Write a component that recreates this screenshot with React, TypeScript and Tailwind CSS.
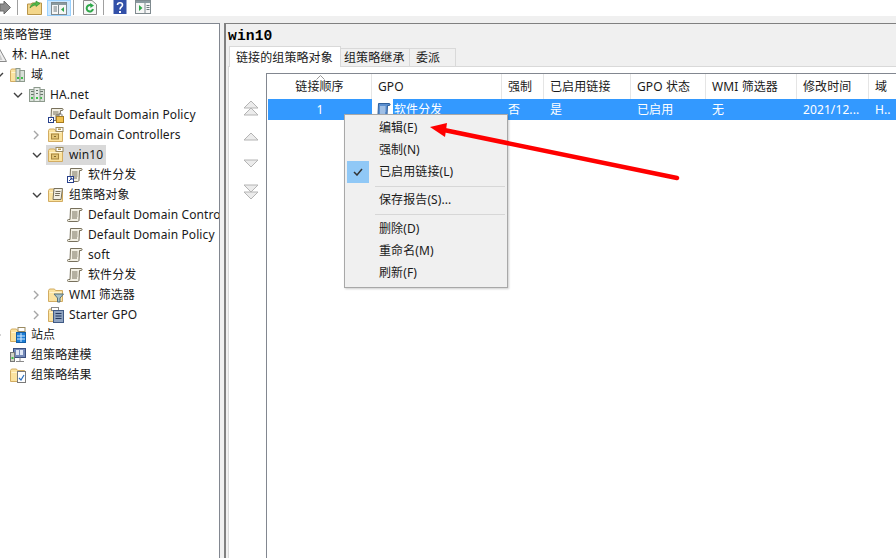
import React from "react";

const Folder = ({ children }: { children?: React.ReactNode }) => (
  <svg width="16" height="16" viewBox="0 0 16 16" className="shrink-0">
    <path d="M0.5 3.5 V14.5 H14.5 V3.5 H7.5 L6.5 2 H1.5 Z" fill="#fbe3a0" stroke="#d2ac62" />
    <path d="M1.5 5 H13.5 V6 H1.5 Z" fill="#fff4cf" />
    {children}
  </svg>
);

const OU = () => (
  <Folder>
    <rect x="8" y="0.5" width="7" height="4" fill="#fff" stroke="#9a8a60" />
    <rect x="10" y="1.5" width="3" height="1.5" fill="#b89a50" />
    <rect x="3.5" y="7" width="7" height="5" fill="#e2c476" stroke="#a5853f" />
    <rect x="6" y="9" width="2" height="1" fill="#7d6a30" />
  </Folder>
);

const Scroll = ({ link, blue }: { link?: boolean; blue?: boolean }) => (
  <svg width="16" height="16" viewBox="0 0 16 16" className="shrink-0">
    <path d="M3.5 1.5 H14 C15.5 1.5 15.5 3.5 14 3.5 H12.5 L12 13 C12 14.5 11 14.5 10 14.5 H1.5 C0 14.5 0 12.5 1.5 12.5 H3 Z" fill={blue ? "#5b8fd0" : "#f3f0e4"} stroke={blue ? "#2f5f9b" : "#77705c"} />
    <path d="M5 5 H10.5 M5 7 H10.5 M5 9 H10.5 M5 11 H10" stroke={blue ? "#e4eefa" : "#77705c"} />
    {link && (
      <>
        <rect x="0.5" y="9.5" width="6" height="6" fill="#fff" stroke="#27408b" />
        <path d="M2 14 L5 11 M3 11 H5 V13" stroke="#27408b" fill="none" />
      </>
    )}
  </svg>
);

const Server = ({ x = 0 }: { x?: number }) => (
  <g transform={`translate(${x} 0)`}>
    <rect x="0.5" y="2.5" width="6" height="12" fill="#d8e0d8" stroke="#8d9a8d" />
    <rect x="2" y="4" width="3" height="1" fill="#66736a" />
    <rect x="2" y="7" width="3" height="1" fill="#66736a" />
    <rect x="2" y="10" width="2" height="2" fill="#3fc04a" />
  </g>
);

const Domain = () => (
  <svg width="16" height="16" viewBox="0 0 16 16" className="shrink-0">
    <Server x={0} />
    <Server x={9} />
    <rect x="5" y="0.5" width="6" height="14" fill="#e6ebe6" stroke="#8d9a8d" />
    <rect x="7" y="3" width="2" height="1" fill="#66736a" />
    <rect x="7" y="6" width="2" height="1" fill="#66736a" />
    <rect x="7" y="10" width="2" height="2" fill="#3fc04a" />
  </svg>
);

const Forest = () => (
  <svg width="16" height="16" viewBox="0 0 16 16" className="shrink-0">
    <path d="M8 1 L15.5 14.5 H0.5 Z" fill="#eeeeee" stroke="#8a8a8a" />
    <path d="M8 5 L11.5 13 H4.5 Z" fill="#c9c9c9" />
  </svg>
);

const Icons: Record<string, React.ReactNode> = {
  forest: <Forest />,
  domain: <Domain />,
  ou: <OU />,
  scroll: <Scroll />,
  link: <Scroll link />,
  domains: (
    <Folder>
      <rect x="6" y="1.5" width="4" height="13" fill="#d8e0d8" stroke="#8d9a8d" />
      <rect x="10" y="3.5" width="4.5" height="11" fill="#d8e0d8" stroke="#8d9a8d" />
      <rect x="7" y="10" width="2" height="2" fill="#3fc04a" />
      <rect x="11" y="10" width="2" height="2" fill="#3fc04a" />
    </Folder>
  ),
  policy: (
    <svg width="16" height="16" viewBox="0 0 16 16" className="shrink-0">
      <path d="M3.5 1.5 H14 C15.5 1.5 15.5 3.5 14 3.5 H12.5 L12 8 H8 V13.5 H1.5 C0 13.5 0 11.5 1.5 11.5 H3 Z" fill="#f3f0e4" stroke="#77705c" />
      <path d="M5 5 H10.5 M5 7 H10.5" stroke="#77705c" />
      <rect x="0.5" y="10.5" width="5" height="5" fill="#fff" stroke="#27408b" />
      <path d="M2 14 L4 12" stroke="#27408b" />
      <rect x="8.5" y="9.5" width="7" height="6" fill="#f2c14e" stroke="#a87c1f" />
      <path d="M10 9.5 V8 C10 6 14 6 14 8 V9.5" fill="none" stroke="#777" />
    </svg>
  ),
  gpos: (
    <Folder>
      <path d="M6 1.5 H14.5 L13 12.5 H5 Z" fill="#f3f0e4" stroke="#77705c" />
      <path d="M7.5 4.5 H12.5 M7.2 6.5 H12 M7 8.5 H11.5" stroke="#77705c" />
    </Folder>
  ),
  wmi: (
    <Folder>
      <path d="M6 7 H15.5 L12 11 V15 H9.5 V11 Z" fill="#a9c3c9" stroke="#55707a" />
    </Folder>
  ),
  starter: (
    <Folder>
      <rect x="3.5" y="0.5" width="7" height="3" fill="#fff" stroke="#888" />
      <rect x="5.5" y="3.5" width="10" height="12" fill="#8fa3c0" stroke="#405a85" />
      <path d="M7.5 6.5 H13.5 M7.5 9 H13.5 M7.5 11.5 H13.5" stroke="#23395f" />
    </Folder>
  ),
  sites: (
    <Folder>
      <rect x="8" y="0.5" width="7" height="4" fill="#fff" stroke="#9a8a60" />
      <rect x="6.5" y="5.5" width="9" height="10" fill="#1e7fd6" stroke="#125ea6" />
      <path d="M11 6 V15 M7 9 H15 M7 12 H15" stroke="#d6ecff" />
    </Folder>
  ),
  modeling: (
    <svg width="16" height="16" viewBox="0 0 16 16" className="shrink-0">
      <rect x="3.5" y="1.5" width="12" height="9" fill="#7389b8" stroke="#3b4f7e" />
      <rect x="6" y="3" width="3" height="5" fill="#dfe7f5" />
      <rect x="10" y="3" width="3" height="5" fill="#dfe7f5" />
      <rect x="0.5" y="5.5" width="4" height="9" fill="#d0d4c8" stroke="#777" />
      <rect x="1.5" y="10" width="2" height="2" fill="#3fc04a" />
      <path d="M6 14.5 H14 M10 10.5 V14.5" stroke="#8a8a8a" />
    </svg>
  ),
  results: (
    <Folder>
      <rect x="7.5" y="4.5" width="8" height="11" fill="#ffffff" stroke="#7a7a7a" />
      <path d="M9 11 L11 13 L14 8" stroke="#2a6fc0" strokeWidth="1.2" fill="none" />
    </Folder>
  ),
};

type Row = { text: string; indent: string; icon?: string; chevron?: "open" | "closed" | "dim"; selected?: boolean };

const rows: Row[] = [
  { text: "组策略管理", indent: "pl-[19px]" },
  { text: "林: HA.net", indent: "pl-[0px]", icon: "forest" },
  { text: "域", indent: "pl-[19px]", icon: "domains", chevron: "open" },
  { text: "HA.net", indent: "pl-[38px]", icon: "domain", chevron: "open" },
  { text: "Default Domain Policy", indent: "pl-[57px]", icon: "policy" },
  { text: "Domain Controllers", indent: "pl-[57px]", icon: "ou", chevron: "closed" },
  { text: "win10", indent: "pl-[57px]", icon: "ou", chevron: "open", selected: true },
  { text: "软件分发", indent: "pl-[76px]", icon: "link" },
  { text: "组策略对象", indent: "pl-[57px]", icon: "gpos", chevron: "open" },
  { text: "Default Domain Controllers Policy", indent: "pl-[76px]", icon: "scroll" },
  { text: "Default Domain Policy", indent: "pl-[76px]", icon: "scroll" },
  { text: "soft", indent: "pl-[76px]", icon: "scroll" },
  { text: "软件分发", indent: "pl-[76px]", icon: "scroll" },
  { text: "WMI 筛选器", indent: "pl-[57px]", icon: "wmi", chevron: "closed" },
  { text: "Starter GPO", indent: "pl-[57px]", icon: "starter", chevron: "closed" },
  { text: "站点", indent: "pl-[19px]", icon: "sites", chevron: "dim" },
  { text: "组策略建模", indent: "pl-[19px]", icon: "modeling" },
  { text: "组策略结果", indent: "pl-[19px]", icon: "results" },
];

const Chevron = ({ kind }: { kind?: Row["chevron"] }) => (
  <span className="w-[17px] h-full shrink-0 flex items-center justify-center pr-[2px]">
    {kind === "open" && (
      <svg width="10" height="7" viewBox="0 0 10 7">
        <path d="M1 1 L5 5 L9 1" fill="none" stroke="#404040" strokeWidth="1.4" />
      </svg>
    )}
    {(kind === "closed" || kind === "dim") && (
      <svg width="7" height="10" viewBox="0 0 7 10">
        <path d="M1 1 L5 5 L1 9" fill="none" stroke="#a6a6a6" strokeWidth="1.4" />
      </svg>
    )}
  </span>
);

const TreeRow = ({ r }: { r: Row }) => (
  <div className={`h-5 flex items-center whitespace-nowrap ${r.indent}`}>
    {r.icon ? (
      <>
        <Chevron kind={r.chevron} />
        <div className={`h-full flex items-center pl-[2px] pr-[3px] ${r.selected ? "bg-[#d9d9d9]" : ""}`}>
          {Icons[r.icon]}
          <span className="ml-[5px]">{r.text}</span>
        </div>
      </>
    ) : (
      <span>{r.text}</span>
    )}
  </div>
);

const Sep = () => <div className="w-px h-[15px] bg-[#a0a0a0] shrink-0" />;

const Toolbar = () => (
  <div className="h-4 shrink-0 bg-white flex items-start">
    <svg width="11" height="15" viewBox="0 0 11 15" className="shrink-0">
      <path d="M0 4 H4 V1 L10.5 7.5 L4 14 V11 H0 Z" fill="#8d8d8d" stroke="#6b6b6b" />
    </svg>
    <div className="ml-[6px]"><Sep /></div>
    <svg width="16" height="15" viewBox="0 0 16 15" className="ml-[9px] shrink-0">
      <path d="M0.5 4 H4 L5 3 H14.5 V14.5 H0.5 Z" fill="#f3d68a" stroke="#b8954a" />
      <path d="M3 8 C4 4 6 3 9 3 V1 L13 3.5 L9 6.5 V5 C7 5 5 6 3 8 Z" fill="#54b84a" stroke="#2c8a2c" strokeWidth="0.6" />
    </svg>
    <div className="ml-[4px] w-[24px] h-4 bg-[#cce8ff] border border-[#99d1ff] flex items-center justify-center shrink-0">
      <svg width="16" height="13" viewBox="0 0 16 13">
        <rect x="0.5" y="0.5" width="15" height="12" fill="#f6f6f6" stroke="#7f8a8f" />
        <rect x="1" y="1" width="14" height="2" fill="#8a9aa0" />
        <path d="M2.5 5 H6 M2.5 7 H6 M2.5 9 H6" stroke="#6d7a80" />
        <path d="M7.5 3 V12" stroke="#7f8a8f" />
        <path d="M13 5 V10 L10 7.5 Z" fill="#2fa84a" />
      </svg>
    </div>
    <div className="ml-[2px]"><Sep /></div>
    <svg width="14" height="15" viewBox="0 0 14 15" className="ml-[9px] shrink-0">
      <path d="M0.5 0.5 H9 L13.5 4.5 V14.5 H0.5 Z" fill="#f7f7f7" stroke="#8a8a8a" />
      <path d="M10 9 A3.2 3.2 0 1 1 8.5 5.5" fill="none" stroke="#2fa84a" strokeWidth="2" />
      <path d="M7 3 L11 5.5 L7.5 8 Z" fill="#2fa84a" />
    </svg>
    <div className="ml-[6px]"><Sep /></div>
    <svg width="14" height="15" viewBox="0 0 14 15" className="ml-[9px] shrink-0">
      <rect width="13" height="14" x="0.5" y="0" fill="#3250a8" />
      <path d="M4.5 5 C4.5 2 9.5 2 9.5 5 C9.5 7 7 7 7 9.5" fill="none" stroke="#fff" strokeWidth="1.6" />
      <rect x="6" y="11" width="2" height="2" fill="#fff" />
    </svg>
    <svg width="16" height="14" viewBox="0 0 16 14" className="ml-[8px] shrink-0">
      <rect x="0.5" y="0.5" width="15" height="13" fill="#f6f6f6" stroke="#7f8a8f" />
      <rect x="1" y="1" width="14" height="2" fill="#8a9aa0" />
      <path d="M10 3 V13" stroke="#7f8a8f" />
      <path d="M11.5 5.5 H14.5 M11.5 7.5 H14.5 M11.5 9.5 H14.5" stroke="#6d7a80" />
      <path d="M4 5 V11 L7.5 8 Z" fill="#2fa84a" />
    </svg>
  </div>
);

const Tree = () => (
  <div className="w-[220px] shrink-0 bg-white border-t border-r border-[#828790] overflow-hidden pt-px">
    <div className="-ml-[28px]">
      {rows.map((r, i) => (
        <TreeRow key={i} r={r} />
      ))}
    </div>
  </div>
);

const Tri = ({ up, className = "" }: { up?: boolean; className?: string }) => (
  <svg width="16" height="9" viewBox="0 0 16 9" className={`block ${className}`}>
    <path d={up ? "M8 1 L15 8 H1 Z" : "M8 8 L15 1 H1 Z"} fill="#ececec" stroke="#b4b4b4" />
  </svg>
);

const MoveButtons = () => (
  <div className="w-[37px] shrink-0 pl-[14px] pt-[27px] flex flex-col">
    <Tri up />
    <Tri up className="-mt-[2px]" />
    <Tri up className="mt-[16px]" />
    <Tri className="mt-[18px]" />
    <Tri className="mt-[16px]" />
    <Tri className="-mt-[2px]" />
  </div>
);

const cols = [
  { w: "w-[104px]", t: "链接顺序" },
  { w: "w-[130px]", t: "GPO" },
  { w: "w-[42px]", t: "强制" },
  { w: "w-[87px]", t: "已启用链接" },
  { w: "w-[75px]", t: "GPO 状态" },
  { w: "w-[91px]", t: "WMI 筛选器" },
  { w: "w-[72px]", t: "修改时间" },
  { w: "w-[40px]", t: "域" },
];

const ListView = () => (
  <div className="flex-1 min-w-0 border-l border-t border-[#828790] overflow-hidden">
    <div className="h-[25px] flex pl-px relative">
      {cols.map((c, i) => (
        <div
          key={c.t}
          className={`${c.w} shrink-0 h-full border-r border-[#e5e5e5] flex items-center whitespace-nowrap ${i === 0 ? "justify-center" : "pl-[6px]"}`}
        >
          {c.t}
        </div>
      ))}
      <svg width="9" height="5" viewBox="0 0 9 5" className="absolute left-[49px] top-[1px]">
        <path d="M0.5 4.5 L4.5 0.5 L8.5 4.5" fill="none" stroke="#9a9a9a" />
      </svg>
    </div>
    <div className="h-[21px] ml-px flex bg-[#3399ff] text-white whitespace-nowrap items-center">
      <div className="w-[104px] text-center shrink-0">1</div>
      <div className="w-[130px] shrink-0 h-full flex items-center">
        <div className="w-[21px] h-full bg-white flex items-center justify-center shrink-0">
          <Scroll blue />
        </div>
        <span className="ml-[1px]">软件分发</span>
      </div>
      <div className="w-[42px] pl-[6px] shrink-0">否</div>
      <div className="w-[87px] pl-[6px] shrink-0">是</div>
      <div className="w-[75px] pl-[6px] shrink-0">已启用</div>
      <div className="w-[91px] pl-[6px] shrink-0">无</div>
      <div className="w-[72px] pl-[6px] shrink-0">2021/12...</div>
      <div className="w-[40px] pl-[6px] shrink-0">H..</div>
    </div>
  </div>
);

const Item = ({ t, checked }: { t: string; checked?: boolean }) => (
  <div className="h-[22px] flex items-center pl-[2px] whitespace-nowrap">
    <div className={`w-[22px] h-[22px] shrink-0 flex items-center justify-center ${checked ? "bg-[#90c8f6]" : ""}`}>
      {checked && (
        <svg width="10" height="8" viewBox="0 0 10 8">
          <path d="M1 4 L4 7 L9 1" fill="none" stroke="#333" strokeWidth="1.5" />
        </svg>
      )}
    </div>
    <span className="ml-[10px]">{t}</span>
  </div>
);

const MenuSep = ({ h }: { h: string }) => (
  <div className={`${h} flex items-center pl-[30px] pr-[2px]`}>
    <div className="h-px w-full bg-[#d7d7d7]" />
  </div>
);

const ContextMenu = () => (
  <div className="absolute left-[344px] top-[114px] w-[164px] h-[174px] bg-[#f0f0f0] border border-[#a8a8a8] py-[2px] shadow-[1px_1px_2px_rgba(0,0,0,0.2)]">
    <Item t="编辑(E)" />
    <Item t="强制(N)" />
    <Item t="已启用链接(L)" checked />
    <MenuSep h="h-[6px]" />
    <Item t="保存报告(S)..." />
    <MenuSep h="h-[7px]" />
    <Item t="删除(D)" />
    <Item t="重命名(M)" />
    <Item t="刷新(F)" />
  </div>
);

const RightPane = () => (
  <div className="flex-1 min-w-0 ml-1 border-t border-l-2 border-[#808080] flex flex-col bg-[#f0f0f0]">
    <div className="h-[22px] shrink-0 flex items-center pl-[2px] pt-[2px] font-['Liberation_Mono','Noto_Sans_CJK_SC',monospace] font-bold text-[14.67px] text-black">
      win10
    </div>
    <div className="h-[21px] shrink-0 flex items-end pl-[3px] relative z-10 -mb-px">
      <div className="w-[112px] h-[21px] bg-white border border-b-0 border-[#d9d9d9] flex items-center pl-[6px] pt-px whitespace-nowrap">
        链接的组策略对象
      </div>
      <div className="w-[69px] h-[18px] border border-b-0 border-l-0 border-[#d9d9d9] flex items-center pl-[3px] pt-px whitespace-nowrap mb-px">
        组策略继承
      </div>
      <div className="w-[46px] h-[18px] border border-b-0 border-l-0 border-[#d9d9d9] flex items-center pl-[6px] pt-px whitespace-nowrap mb-px">
        委派
      </div>
    </div>
    <div className="flex-1 min-h-0 ml-[2px] bg-white border-l border-t border-[#d9d9d9] flex pt-[6px]">
      <MoveButtons />
      <ListView />
    </div>
  </div>
);

export default function App() {
  return (
    <div className="relative w-[896px] h-[558px] overflow-hidden bg-white flex flex-col text-[12px] leading-none tracking-[0.1px] text-[#1a1a1a] font-['Noto_Sans','Noto_Sans_CJK_SC',sans-serif]">
      <Toolbar />
      <div className="flex-1 min-h-0 flex pt-[7px] bg-[#f0f0f0]">
        <Tree />
        <RightPane />
      </div>
      <ContextMenu />
      <svg width="896" height="558" viewBox="0 0 896 558" className="absolute left-0 top-0 pointer-events-none">
        <path d="M677 178 L444 130" stroke="#ff0000" strokeWidth="4.5" strokeLinecap="round" fill="none" />
        <path d="M430 127 L447 123 L445 137 Z" fill="#ff0000" />
      </svg>
    </div>
  );
}
